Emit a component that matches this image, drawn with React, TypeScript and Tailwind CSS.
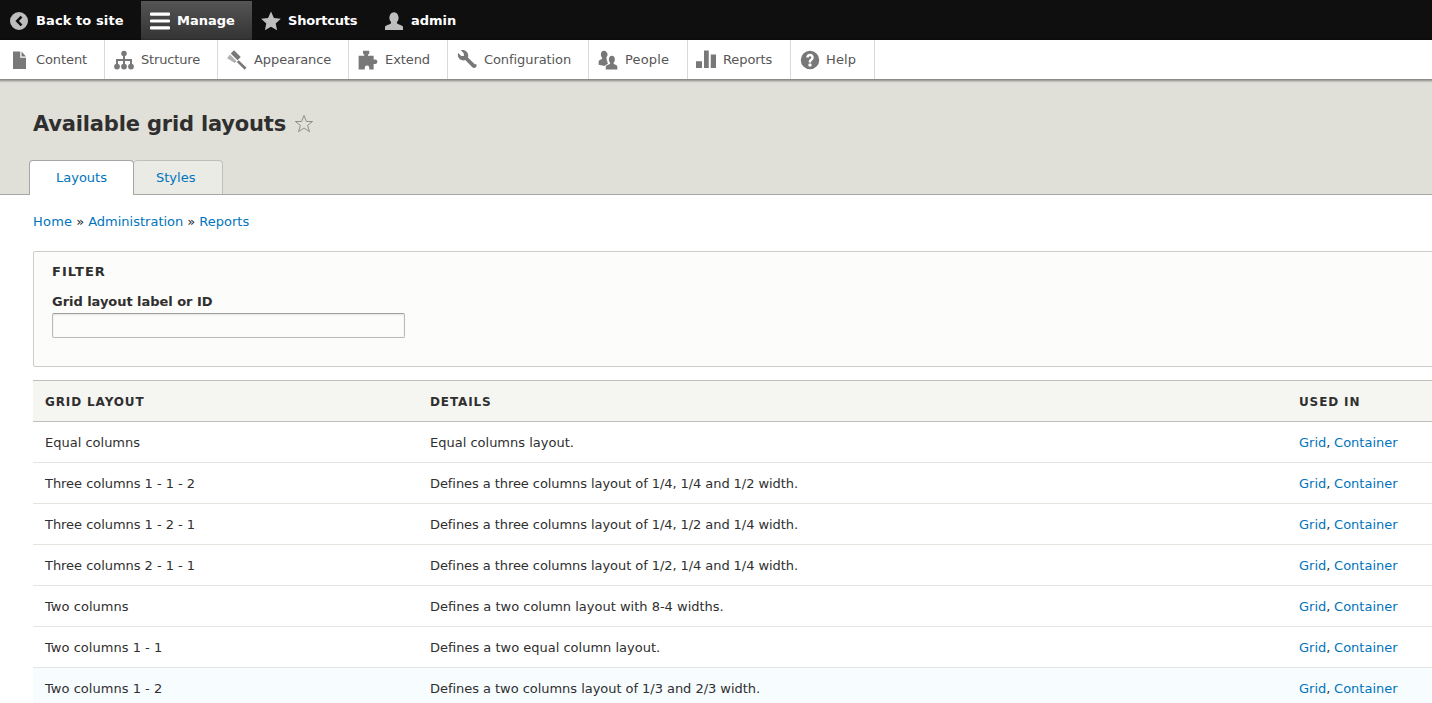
const F = "font-['DejaVu_Sans',sans-serif]";

const Wrap = ({ children, size = 20, fill = "#787878", vb = "0 0 16 16" }: { children: React.ReactNode; size?: number; fill?: string; vb?: string }) => (
  <svg width={size} height={size} viewBox={vb} fill={fill} className="block shrink-0">{children}</svg>
);

const icons: Record<string, React.ReactNode> = {
  Content: (
    <>
      <path d="M2.4 1.2h5.8v5h4.6v9h-10.4z" />
      <path d="M9.2 1.2l3.6 3.9h-3.6z" />
    </>
  ),
  Structure: (
    <>
      <circle cx="8" cy="2.7" r="2.2" />
      <circle cx="2.4" cy="13.2" r="2.3" />
      <circle cx="8" cy="13.2" r="2.3" />
      <circle cx="13.6" cy="13.2" r="2.3" />
      <path d="M7.2 4h1.6v3.2h5.6v4h-1.6v-2.4h-4v2.4h-1.6v-2.4h-4v2.4h-1.6v-4h5.6z" />
    </>
  ),
  Appearance: (
    <>
      <path d="M5.6 .2l5.4 5.4-2.6 2.6-5.4-5.4z" />
      <path d="M2.3 3.6l5.4 5.4-1.5 1.3-6.1-3.8z" fill="#b0b0b0" />
      <path d="M9.4 8.2l6.2 6-1.5 1.6-6.2-6.2z" />
    </>
  ),
  Extend: (
    <path d="M4 .5h5v2.2l-1 1v.8h4.5v3h1.2a1.8 1.8 0 1 1 0 3.6h-1.2v4.4h-3.5v-1.2a1.8 1.8 0 1 0-3.6 0v1.2h-4.9v-11h4.5v-.8l-1-1z" />
  ),
  Configuration: (
    <path d="M14.4 11.6l-5.65-5.66c.15-.45.25-.92.25-1.42 0-2.49-2.02-4.5-4.5-4.5-.5 0-.98.1-1.43.25l2.43 2.43v2.13l-.01.01h-2.1l-2.47-2.47c-.15.46-.25.94-.25 1.45 0 2.48 2.02 4.5 4.5 4.5.5 0 .97-.1 1.42-.25l5.67 5.67c.78.78 2.05.78 2.83 0s.78-2.05 0-2.83z" />
  ),
  People: (
    <>
      <path d="M6.2 15.5v-2.2c0-.9 2.4-1.7 3.3-2.1.3-.2.3-.8.1-1.2-.5-.6-.9-1.4-.9-2.4 0-1.8.9-3 2.4-3s2.4 1.2 2.4 3c0 1-.4 1.8-.9 2.4-.2.4-.2 1 .1 1.2.9.4 2.8 1.2 2.8 2.1v2.2z" />
      <path d="M5.4 12.7c.5-.7 1.6-1.2 2.7-1.7-.6-.4-.7-1-.5-1.6-.5-.8-.8-1.6-.8-2.6 0-1.2.3-2.2 1-2.9-.4-2-1.4-3.4-3.1-3.4-1.5 0-2.4 1.3-2.4 3.1 0 1 .4 1.8.9 2.4.2.4.2 1-.1 1.2-.9.4-2.6 1.1-2.6 2.1v2.4z" />
    </>
  ),
  Reports: <path d="M0 9h4.8v5.4h-4.8z M6.4 .4h3.8v14h-3.8z M11.8 3.6h4.2v10.8h-4.2z" />,
  Help: (
    <path fillRule="evenodd" d="M8 .6a7.4 7.4 0 1 0 0 14.8a7.4 7.4 0 0 0 0-14.8zM11 6c0 .55-.16 1.09-.48 1.59l-.16.22c-.07.09-.19.24-.36.39-.17.15-.35.3-.55.45l-.2.19-.14.13-.1.17-.02.24v.63h-2v-.7c.03-.4.08-.73.2-1 .13-.27.27-.5.44-.69l.22-.21.18-.16.14-.13c.19-.14.36-.28.52-.42l.15-.18c.1-.15.17-.32.17-.52 0-.55-.45-1-1-1s-1 .45-1 1h-2c0-1.66 1.34-3 3-3s3 1.34 3 3zM9.25 12.62c0 .34-.28.62-.62.62h-1.25c-.35 0-.63-.28-.63-.62v-1.24c0-.34.28-.63.63-.63h1.25c.34 0 .62.29.62.63z" />
  ),
};

const nav: [string, number, number, number, string][] = [
  ["Content", 105, 10, 36, "tracking-[-0.08px]"],
  ["Structure", 113, 9, 36, "tracking-[-0.15px]"],
  ["Appearance", 131, 9, 36, "tracking-[-0.08px]"],
  ["Extend", 99, 9, 36, "tracking-[-0.08px]"],
  ["Configuration", 141, 9, 36, "tracking-[-0.08px]"],
  ["People", 99, 9, 36, "tracking-[0.15px]"],
  ["Reports", 103, 8, 35, "tracking-[-0.08px]"],
  ["Help", 84, 9, 35, "tracking-[0.1px]"],
];

const rows: [string, string, string, string][] = [
  ["Equal columns", "Equal columns layout.", "", ""],
  ["Three columns 1 - 1 - 2", "Defines a three columns layout of 1/4, 1/4 and 1/2 width.", "tracking-[-0.04px]", "tracking-[-0.07px]"],
  ["Three columns 1 - 2 - 1", "Defines a three columns layout of 1/4, 1/2 and 1/4 width.", "tracking-[-0.04px]", "tracking-[-0.07px]"],
  ["Three columns 2 - 1 - 1", "Defines a three columns layout of 1/2, 1/4 and 1/4 width.", "tracking-[-0.04px]", "tracking-[-0.07px]"],
  ["Two columns", "Defines a two column layout with 8-4 widths.", "tracking-[0.05px]", ""],
  ["Two columns 1 - 1", "Defines a two equal column layout.", "tracking-[0.03px]", ""],
  ["Two columns 1 - 2", "Defines a two columns layout of 1/3 and 2/3 width.", "tracking-[0.03px]", "tracking-[-0.04px]"],
];

const link = "text-[#0074bd]";

export default function App() {
  return (
    <div className={`${F} h-[703px] w-[1432px] overflow-hidden bg-white text-[13px] leading-[19px] text-[#222330]`}>
      <div className="flex h-10 items-stretch bg-[#0f0f0f] pt-px pl-[10px] font-bold text-white">
        <div className="flex w-[131px] items-center gap-[8px]">
          <Wrap size={18} fill="#bebebe" vb="0 0 18 18">
            <path fillRule="evenodd" d="M9 0a9 9 0 1 0 0 18a9 9 0 0 0 0-18zM10.6 3.8l1.8 1.8-3.4 3.4 3.4 3.4-1.8 1.8-5.2-5.2z" />
          </Wrap>
          <span className="tracking-[0.1px]">Back to site</span>
        </div>
        <div className="flex w-[111px] items-center gap-[7px] bg-gradient-to-b from-[#555555] to-[#333333] pl-[9px]">
          <Wrap fill="#ffffff" vb="0 0 20 20">
            <path d="M1 1.5h18a1 1 0 0 1 1 1v1.2a1 1 0 0 1-1 1h-18a1 1 0 0 1-1-1v-1.2a1 1 0 0 1 1-1z M1 8.4h18a1 1 0 0 1 1 1v1.2a1 1 0 0 1-1 1h-18a1 1 0 0 1-1-1v-1.2a1 1 0 0 1 1-1z M1 15.3h18a1 1 0 0 1 1 1v1.2a1 1 0 0 1-1 1h-18a1 1 0 0 1-1-1v-1.2a1 1 0 0 1 1-1z" />
          </Wrap>
          <span>Manage</span>
        </div>
        <div className="flex w-[131px] items-center gap-[7px] pl-[9px]">
          <Wrap fill="#bebebe" vb="0 0 20 20">
            <path d="M10 0.5l2.9 6.4 6.9.8-5.1 4.7 1.4 6.9-6.1-3.5-6.1 3.5 1.4-6.9-5.1-4.7 6.9-.8z" />
          </Wrap>
          <span className="tracking-[-0.2px]">Shortcuts</span>
        </div>
        <div className="flex items-center gap-[7px] pl-px">
          <Wrap fill="#bebebe" vb="0 0 20 20">
            <path d="M1 19v-3c0-1.3 4-2.6 5.6-3.3.6-.4.6-1.2.2-1.9-.8-1-1.4-2.3-1.4-3.8 0-3 1.7-5.8 4.6-5.8s4.6 2.8 4.6 5.8c0 1.5-.6 2.8-1.4 3.8-.4.7-.4 1.5.2 1.9 1.6.7 5.6 2 5.6 3.3v3z" />
          </Wrap>
          <span>admin</span>
        </div>
      </div>

      <div className="relative z-10 flex h-[39px] bg-white text-[#565656] shadow-[0_1px_2px_1px_rgba(0,0,0,0.4)]">
        {nav.map(([label, w, off, textAt, track]) => (
          <div key={label} style={{ width: w }} className="flex shrink-0 items-center border-r border-[#d9d9d9]">
            <div style={{ width: textAt, paddingLeft: off }} className="shrink-0">
              <Wrap>{icons[label]}</Wrap>
            </div>
            <span className={track}>{label}</span>
          </div>
        ))}
      </div>

      <div className="h-[116px] border-b border-[#a6a6a6] bg-[#e0e0d8] pt-[2px] pl-[29px]">
        <div className="flex h-[79px] items-center gap-[8px] pt-[6px] pl-[4px]">
          <h1 className="text-[21px] leading-[28px] font-bold tracking-[-0.18px] text-[#2f2f2f]">Available grid layouts</h1>
          <svg width="20" height="20" viewBox="0 0 20 20" fill="none" stroke="#8f8f80" strokeWidth="1" className="block">
            <path d="M10 1.5l2.4 6h6.2l-5 3.9 1.9 6.3-5.5-3.7-5.5 3.7 1.9-6.3-5-3.9h6.2z" />
          </svg>
        </div>
        <div className="flex items-end">
          <div className={`relative z-10 -mb-px flex h-[35px] w-[105px] items-center justify-center rounded-t-[4px] border border-b-0 border-[#a6a6a6] bg-white pb-px ${link}`}>Layouts</div>
          <div className={`flex h-[34px] w-[89px] items-center rounded-t-[4px] border border-b-0 border-l-0 border-[#bfbfba] bg-[#ebebe6] pl-[22px] ${link}`}>Styles</div>
        </div>
      </div>

      <div className="pl-[33px]">
        <div className="mb-[4px] flex h-[52px] items-center gap-[4px] pt-px text-[#222330]">
          <a className={`${link} tracking-[0.2px]`}>Home</a><span>»</span><a className={link}>Administration</a><span>»</span><a className={link}>Reports</a>
        </div>

        <div className="h-[116px] w-[1420px] rounded-[2px] border border-[#cccccc] bg-[#fcfcfa] pt-[10px] pl-[18px] text-[#2f2f2f]">
          <div className="font-bold tracking-[1.04px] uppercase">Filter</div>
          <label className="mt-[11px] block font-bold tracking-[-0.04px]">Grid layout label or ID</label>
          <input aria-label="Grid layout label or ID" className="mt-[2px] block h-[25px] w-[353px] rounded-[2px] border border-[#b8b8b8] border-t-[#a0a0a0] bg-[#fcfcfa] shadow-[inset_0_1px_2px_rgba(0,0,0,0.1)]" />
        </div>

        <div className="mt-[13px] w-[1420px]">
          <div className="flex h-[42px] items-center border-y border-[#bfbfba] bg-[#f5f5f2] pt-[2px] text-[12px] font-bold tracking-[0.88px] text-[#2f2f2f] uppercase">
            <div className="w-[385px] pl-[12px]">Grid layout</div>
            <div className="w-[869px] pl-[12px]">Details</div>
            <div className="pl-[12px]">Used in</div>
          </div>
          {rows.map(([a, b, ta, tb], i) => (
            <div key={a} className={`flex h-[41px] items-center border-b border-[#e6e4df] text-[#2f2f2f] ${i === 6 ? "bg-[#f7fcff]" : ""}`}>
              <div className={`w-[385px] pl-[12px] ${ta}`}>{a}</div>
              <div className={`w-[869px] pl-[12px] ${tb}`}>{b}</div>
              <div className="pl-[12px]"><a className={link}>Grid</a>, <a className={`${link} -ml-[0.5px] inline-block`}>Container</a></div>
            </div>
          ))}
        </div>
      </div>
    </div>
  );
}
